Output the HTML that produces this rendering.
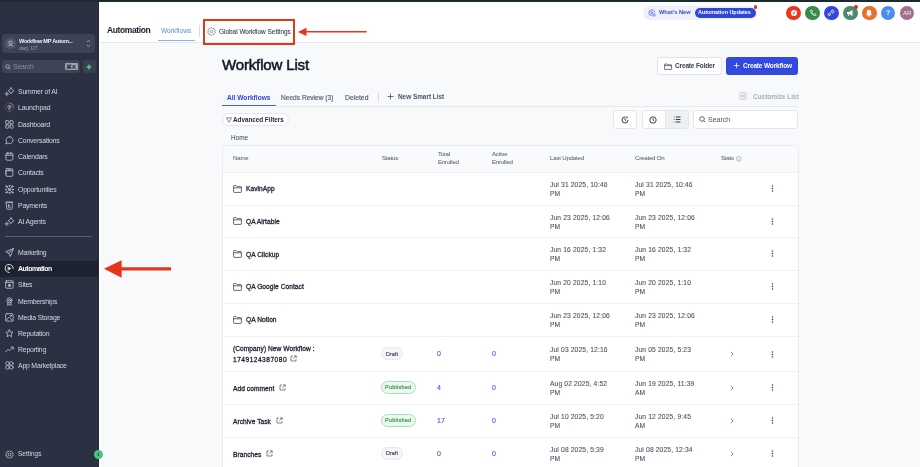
<!DOCTYPE html><html><head><meta charset="utf-8"><title>Workflow List</title><style>
*{margin:0;padding:0;box-sizing:border-box}
html,body{width:920px;height:467px;overflow:hidden;background:#f8f9fb;font-family:"Liberation Sans", sans-serif;}
.abs{position:absolute}
.t{position:absolute;white-space:nowrap;line-height:10px;will-change:transform}
svg{position:absolute;overflow:visible}
</style></head><body>
<div class="abs" style="left:0;top:0;width:920px;height:2px;background:#1b2a2e"></div>
<div class="abs" style="left:0;top:2px;width:99px;height:465px;background:#2b3143"></div>
<div class="abs" style="left:98px;top:2px;width:1px;height:465px;background:#232939"></div>
<div class="abs" style="left:99px;top:2px;width:2.5px;height:465px;background:linear-gradient(90deg,#ffffff,#f8f9fb)"></div>
<div class="abs" style="left:2px;top:34px;width:93px;height:19px;border-radius:4px;background:#3d4356"></div>
<div class="abs" style="left:5px;top:38px;width:11px;height:11px;border-radius:50%;background:#52586a"></div>
<svg style="left:7px;top:40px" width="7" height="7" viewBox="0 0 7 7"><circle cx="3.5" cy="2.6" r="1.6" fill="none" stroke="#c9cdd6" stroke-width="0.8"/><path d="M1 6.3 C1.5 4.6 5.5 4.6 6 6.3" fill="none" stroke="#c9cdd6" stroke-width="0.8"/></svg>
<div class="t" style="left:19px;top:35.9px;font-size:5.6px;font-weight:bold;letter-spacing:-0.25px;color:#f2f3f5">Workflow MP Autom...</div>
<div class="t" style="left:19px;top:43px;font-size:5.3px;color:#9aa0ad">darj, UT</div>
<svg style="left:86px;top:39px" width="5" height="9" viewBox="0 0 5 9"><path d="M1 3 L2.5 1.3 L4 3 M1 6 L2.5 7.7 L4 6" fill="none" stroke="#b8bdc8" stroke-width="0.7"/></svg>
<div class="abs" style="left:2px;top:60px;width:78px;height:13px;border-radius:3px;background:#3e4456"></div>
<svg style="left:4.5px;top:63.5px" width="6" height="6" viewBox="0 0 6 6"><circle cx="2.6" cy="2.6" r="1.8" fill="none" stroke="#b9bdc6" stroke-width="0.8"/><path d="M3.9 3.9 L5.4 5.4" stroke="#b9bdc6" stroke-width="0.8"/></svg>
<div class="t" style="left:13px;top:61.7px;font-size:6.8px;letter-spacing:-0.15px;color:#8a909c">Search</div>
<div class="abs" style="left:65px;top:63px;width:13px;height:7px;border-radius:1px;background:#9ea3ae"></div>
<div class="t" style="left:66px;top:61.5px;font-size:5.5px;font-weight:bold;color:#1d2230;letter-spacing:0.3px">&#8984;K</div>
<div class="abs" style="left:83px;top:60px;width:12.5px;height:13px;border-radius:3px;background:#3a4052"></div>
<svg style="left:86.3px;top:63.8px" width="6" height="6" viewBox="0 0 6 6"><path d="M3 0.2 L4 2 L5.6 3 L4 4 L3 5.8 L2 4 L0.4 3 L2 2Z" fill="#3ecf77" stroke="#3ecf77" stroke-width="0.3" stroke-linejoin="round"/></svg>
<div class="abs" style="left:0;top:261px;width:98px;height:15.5px;background:#1d2130"></div>
<div class="abs" style="left:5px;top:236px;width:87px;height:1px;background:#5a6070"></div>
<svg style="left:5.4px;top:86.90px" width="8.8" height="8.8" viewBox="0 0 9 9" fill="none" stroke="#c5c9d2" stroke-width="0.8" stroke-linecap="round" stroke-linejoin="round"><path d="M6.2 0.9 Q7.1 3 9.1 3.9 Q7.1 4.8 6.2 6.9 Q5.3 4.8 3.3 3.9 Q5.3 3 6.2 0.9Z"/><path d="M1.9 5.1 V8.9 M0 7 H3.8"/></svg>
<div class="t" style="left:18px;top:86.95px;font-size:6.9px;letter-spacing:-0.2px;color:#d3d7de">Summer of AI</div>
<svg style="left:5.4px;top:103.40px" width="8.8" height="8.8" viewBox="0 0 9 9" fill="none" stroke="#c5c9d2" stroke-width="0.8" stroke-linecap="round" stroke-linejoin="round"><circle cx="4.5" cy="4.5" r="4.5" stroke="#555c6e"/><path d="M5.2 0.05 A4.5 4.5 0 0 1 8.9 3.6" stroke="#c98236"/><path d="M4.5 6.9 C3.4 5.6 2.9 4.8 2.9 4 A1.6 1.6 0 0 1 6.1 4 C6.1 4.8 5.6 5.6 4.5 6.9Z" stroke="#aeb3be"/><circle cx="4.5" cy="4" r="0.5" stroke="#aeb3be"/></svg>
<div class="t" style="left:18px;top:103.45px;font-size:6.9px;letter-spacing:-0.2px;color:#d3d7de">Launchpad</div>
<svg style="left:5.4px;top:119.50px" width="8.8" height="8.8" viewBox="0 0 9 9" fill="none" stroke="#c5c9d2" stroke-width="0.8" stroke-linecap="round" stroke-linejoin="round"><rect x="0.7" y="0.7" width="3.2" height="3.2" rx="0.6"/><rect x="5.1" y="0.7" width="3.2" height="3.2" rx="0.6"/><rect x="0.7" y="5.1" width="3.2" height="3.2" rx="0.6"/><rect x="5.1" y="5.1" width="3.2" height="3.2" rx="0.6"/></svg>
<div class="t" style="left:18px;top:119.55px;font-size:6.9px;letter-spacing:-0.2px;color:#d3d7de">Dashboard</div>
<svg style="left:5.4px;top:135.60px" width="8.8" height="8.8" viewBox="0 0 9 9" fill="none" stroke="#c5c9d2" stroke-width="0.8" stroke-linecap="round" stroke-linejoin="round"><path d="M4.8 0.8 A3.5 3.5 0 1 1 2.9 7.3 L0.8 8.2 L1.6 6.2 A3.5 3.5 0 0 1 4.8 0.8Z"/></svg>
<div class="t" style="left:18px;top:135.65px;font-size:6.9px;letter-spacing:-0.2px;color:#d3d7de">Conversations</div>
<svg style="left:5.4px;top:152.00px" width="8.8" height="8.8" viewBox="0 0 9 9" fill="none" stroke="#c5c9d2" stroke-width="0.8" stroke-linecap="round" stroke-linejoin="round"><rect x="0.9" y="1.2" width="7.2" height="7.2" rx="1.2"/><path d="M0.9 3.4 H8.1 M3 0.5 V2.3 M6 0.5 V2.3"/></svg>
<div class="t" style="left:18px;top:152.05px;font-size:6.9px;letter-spacing:-0.2px;color:#d3d7de">Calendars</div>
<svg style="left:5.4px;top:168.20px" width="8.8" height="8.8" viewBox="0 0 9 9" fill="none" stroke="#c5c9d2" stroke-width="0.8" stroke-linecap="round" stroke-linejoin="round"><rect x="1" y="0.7" width="7" height="7.8" rx="1"/><path d="M1 2.8 H8 M0.4 4.2 H1 M0.4 6 H1"/><path d="M3.3 2.8 V1.8 H5.7 V2.8"/></svg>
<div class="t" style="left:18px;top:168.25px;font-size:6.9px;letter-spacing:-0.2px;color:#d3d7de">Contacts</div>
<svg style="left:5.4px;top:184.60px" width="8.8" height="8.8" viewBox="0 0 9 9" fill="none" stroke="#c5c9d2" stroke-width="0.8" stroke-linecap="round" stroke-linejoin="round"><circle cx="1.4" cy="1.4" r="0.7"/><circle cx="7.6" cy="1.4" r="0.7"/><circle cx="1.4" cy="7.6" r="0.7"/><circle cx="7.6" cy="7.6" r="0.7"/><circle cx="4.5" cy="4.5" r="0.8"/><circle cx="4.5" cy="1" r="0.6"/><circle cx="4.5" cy="8" r="0.6"/><circle cx="1" cy="4.5" r="0.6"/><circle cx="8" cy="4.5" r="0.6"/><path d="M2.2 2.2 L3.8 3.8 M6.8 2.2 L5.2 3.8 M2.2 6.8 L3.8 5.2 M6.8 6.8 L5.2 5.2"/></svg>
<div class="t" style="left:18px;top:184.65px;font-size:6.9px;letter-spacing:-0.2px;color:#d3d7de">Opportunities</div>
<svg style="left:5.4px;top:200.70px" width="8.8" height="8.8" viewBox="0 0 9 9" fill="none" stroke="#c5c9d2" stroke-width="0.8" stroke-linecap="round" stroke-linejoin="round"><path d="M1.6 1.2 H7.4 V7.6 Q7.4 8.4 6.6 8.4 H2.4 Q1.6 8.4 1.6 7.6Z M1 1.2 H8"/><path d="M3.5 3.4 V6.4 H5.5 M3.5 4.9 H4.8"/></svg>
<div class="t" style="left:18px;top:200.75px;font-size:6.9px;letter-spacing:-0.2px;color:#d3d7de">Payments</div>
<svg style="left:5.4px;top:216.80px" width="8.8" height="8.8" viewBox="0 0 9 9" fill="none" stroke="#c5c9d2" stroke-width="0.8" stroke-linecap="round" stroke-linejoin="round"><path d="M6.2 0.9 Q7.1 3 9.1 3.9 Q7.1 4.8 6.2 6.9 Q5.3 4.8 3.3 3.9 Q5.3 3 6.2 0.9Z"/><path d="M1.9 5.1 V8.9 M0 7 H3.8"/></svg>
<div class="t" style="left:18px;top:216.85px;font-size:6.9px;letter-spacing:-0.2px;color:#d3d7de">AI Agents</div>
<svg style="left:5.4px;top:247.90px" width="8.8" height="8.8" viewBox="0 0 9 9" fill="none" stroke="#c5c9d2" stroke-width="0.8" stroke-linecap="round" stroke-linejoin="round"><path d="M8.3 0.7 L0.7 3.7 L3.8 5.2 L5.3 8.3Z M3.8 5.2 L8.3 0.7"/></svg>
<div class="t" style="left:18px;top:247.95px;font-size:6.9px;letter-spacing:-0.2px;color:#d3d7de">Marketing</div>
<svg style="left:5.4px;top:264.00px" width="8.8" height="8.8" viewBox="0 0 9 9" fill="none" stroke="#c5c9d2" stroke-width="0.8" stroke-linecap="round" stroke-linejoin="round"><path d="M8.4 4.6 A4.1 4.1 0 1 0 4.3 8.7" stroke="#e8eaee" stroke-width="0.95"/><path d="M3.3 3.1 L6.1 4.6 L3.3 6.1Z" fill="#e8eaee" stroke="#e8eaee" stroke-width="0.5"/></svg>
<div class="t" style="left:18px;top:264.05px;font-size:6.9px;letter-spacing:-0.2px;font-weight:bold;letter-spacing:-0.45px;color:#ffffff">Automation</div>
<svg style="left:5.4px;top:280.10px" width="8.8" height="8.8" viewBox="0 0 9 9" fill="none" stroke="#c5c9d2" stroke-width="0.8" stroke-linecap="round" stroke-linejoin="round"><rect x="0.7" y="0.8" width="7.6" height="7.6" rx="0.8"/><path d="M0.7 2.6 H8.3"/><circle cx="4.5" cy="5.5" r="1.1" fill="#c5c9d2"/></svg>
<div class="t" style="left:18px;top:280.15px;font-size:6.9px;letter-spacing:-0.2px;color:#d3d7de">Sites</div>
<svg style="left:5.4px;top:296.60px" width="8.8" height="8.8" viewBox="0 0 9 9" fill="none" stroke="#c5c9d2" stroke-width="0.8" stroke-linecap="round" stroke-linejoin="round"><circle cx="4.5" cy="3.4" r="2.6"/><circle cx="4.5" cy="3.4" r="1.1"/><path d="M3 5.6 L2.7 8.5 L4.5 7.6 L6.3 8.5 L6 5.6"/></svg>
<div class="t" style="left:18px;top:296.65px;font-size:6.9px;letter-spacing:-0.2px;color:#d3d7de">Memberships</div>
<svg style="left:5.4px;top:312.60px" width="8.8" height="8.8" viewBox="0 0 9 9" fill="none" stroke="#c5c9d2" stroke-width="0.8" stroke-linecap="round" stroke-linejoin="round"><rect x="0.7" y="0.7" width="7.6" height="7.6" rx="1.2"/><path d="M0.9 7.6 L4.2 4.2 L8.1 8.1"/><circle cx="6" cy="2.8" r="0.7"/></svg>
<div class="t" style="left:18px;top:312.65px;font-size:6.9px;letter-spacing:-0.2px;color:#d3d7de">Media Storage</div>
<svg style="left:5.4px;top:328.80px" width="8.8" height="8.8" viewBox="0 0 9 9" fill="none" stroke="#c5c9d2" stroke-width="0.8" stroke-linecap="round" stroke-linejoin="round"><path d="M4.5 0.8 L5.6 3.1 L8.2 3.4 L6.3 5.1 L6.8 7.9 L4.5 6.5 L2.2 7.9 L2.7 5.1 L0.8 3.4 L3.4 3.1Z"/></svg>
<div class="t" style="left:18px;top:328.85px;font-size:6.9px;letter-spacing:-0.2px;color:#d3d7de">Reputation</div>
<svg style="left:5.4px;top:345.20px" width="8.8" height="8.8" viewBox="0 0 9 9" fill="none" stroke="#c5c9d2" stroke-width="0.8" stroke-linecap="round" stroke-linejoin="round"><path d="M0.5 7.2 L3.2 4.3 L4.8 5.8 L8.3 2.2 M6.1 2.1 H8.4 V4.4"/></svg>
<div class="t" style="left:18px;top:345.25px;font-size:6.9px;letter-spacing:-0.2px;color:#d3d7de">Reporting</div>
<svg style="left:5.4px;top:361.40px" width="8.8" height="8.8" viewBox="0 0 9 9" fill="none" stroke="#c5c9d2" stroke-width="0.8" stroke-linecap="round" stroke-linejoin="round"><circle cx="2.6" cy="2.6" r="1.9"/><circle cx="6.4" cy="2.6" r="1.9"/><circle cx="2.6" cy="6.4" r="1.9"/><circle cx="6.4" cy="6.4" r="1.9"/></svg>
<div class="t" style="left:18px;top:361.45px;font-size:6.9px;letter-spacing:-0.2px;color:#d3d7de">App Marketplace</div>
<svg style="left:5px;top:449.5px" width="9" height="9" viewBox="0 0 9 9" fill="none" stroke="#c5c9d2" stroke-width="0.75"><path d="M4.5 0.6 L5.4 1.5 L6.7 1.3 L7 2.6 L8.2 3.3 L7.6 4.5 L8.2 5.7 L7 6.4 L6.7 7.7 L5.4 7.5 L4.5 8.4 L3.6 7.5 L2.3 7.7 L2 6.4 L0.8 5.7 L1.4 4.5 L0.8 3.3 L2 2.6 L2.3 1.3 L3.6 1.5Z"/><circle cx="4.5" cy="4.5" r="1.4"/></svg>
<div class="t" style="left:18px;top:449px;font-size:6.5px;color:#d3d7de">Settings</div>
<div class="abs" style="left:93.5px;top:449.7px;width:9.4px;height:9.4px;border-radius:50%;background:#4ec47f"></div>
<svg style="left:96px;top:452px" width="5" height="5" viewBox="0 0 5 5"><path d="M3.2 0.8 L1.6 2.5 L3.2 4.2" fill="none" stroke="#1b3326" stroke-width="1"/></svg>
<div class="abs" style="left:99.5px;top:2px;width:821px;height:40.5px;background:#ffffff;border-bottom:1px solid #e4e7ec"></div>
<div class="t" style="left:106.5px;top:24.9px;font-size:8.5px;font-weight:bold;color:#1f2430;letter-spacing:-0.4px;-webkit-text-stroke:0.05px #1f2430">Automation</div>
<div class="t" style="left:161px;top:26px;font-size:6.6px;color:#4d8fdb">Workflows</div>
<div class="abs" style="left:158px;top:40px;width:37px;height:1px;background:#8cb5e6"></div>
<div class="abs" style="left:198.5px;top:25px;width:0.8px;height:12px;background:#d9dce2"></div>
<svg style="left:206.5px;top:27px" width="9" height="9" viewBox="0 0 9 9" fill="none" stroke="#5b6170" stroke-width="0.6"><path d="M4.5 0.5 L5.4 1.4 L6.7 1.2 L7 2.5 L8.3 3.2 L7.7 4.5 L8.3 5.8 L7 6.5 L6.7 7.8 L5.4 7.6 L4.5 8.5 L3.6 7.6 L2.3 7.8 L2 6.5 L0.7 5.8 L1.3 4.5 L0.7 3.2 L2 2.5 L2.3 1.2 L3.6 1.4Z"/><circle cx="4.5" cy="4.5" r="1.2"/></svg>
<div class="t" style="left:219px;top:27px;font-size:6.45px;color:#3a404e;-webkit-text-stroke:0.1px #3a404e">Global Workflow Settings</div>
<div class="abs" style="left:203px;top:19px;width:91.5px;height:25.7px;border:2px solid #e5361b"></div>
<svg style="left:0;top:0" width="920" height="467"><path d="M306 31.8 H366" stroke="#e5361b" stroke-width="1.6" stroke-linecap="round"/><path d="M297.8 31.9 L306.5 27.8 L306.5 36.1Z" fill="#e5361b"/><path d="M120 268.9 H171" stroke="#e5361b" stroke-width="3.2"/><path d="M104 268.7 L121.6 260.2 L121.6 277.8Z" fill="#e5361b"/></svg>
<div class="abs" style="left:643px;top:6px;width:114px;height:13.7px;border-radius:7px;background:#eef1fb"></div>
<svg style="left:648px;top:8.8px" width="8" height="8" viewBox="0 0 8 8" fill="none" stroke="#4a5bd0" stroke-width="0.7"><path d="M6.8 3.6 A3 3 0 1 0 3.8 6.8"/><path d="M3 2.5 L5 3.8 L3 5Z"/><circle cx="6" cy="6" r="1.2"/></svg>
<div class="t" style="left:659px;top:7.4px;font-size:5.7px;font-weight:bold;color:#3b4cc5">What&#39;s New</div>
<div class="abs" style="left:694.5px;top:7.7px;width:61px;height:10px;border-radius:5px;background:#3047d6"></div>
<div class="t" style="left:698.3px;top:7.3px;font-size:5.4px;font-weight:bold;color:#ffffff">Automation Updates</div>
<div class="abs" style="left:753.7px;top:5.2px;width:3.6px;height:3.6px;border-radius:50%;background:#d8301e"></div>
<div class="abs" style="left:786.2px;top:5.7px;width:14.6px;height:14.6px;border-radius:50%;background:#e5391f"></div>
<div class="abs" style="left:805.2px;top:5.7px;width:14.6px;height:14.6px;border-radius:50%;background:#388a4a"></div>
<div class="abs" style="left:824.1px;top:5.7px;width:14.6px;height:14.6px;border-radius:50%;background:#3347dd"></div>
<div class="abs" style="left:843.1px;top:5.7px;width:14.6px;height:14.6px;border-radius:50%;background:#4b8a6b"></div>
<div class="abs" style="left:862.0px;top:5.7px;width:14.6px;height:14.6px;border-radius:50%;background:#e8702a"></div>
<div class="abs" style="left:880.9px;top:5.7px;width:14.6px;height:14.6px;border-radius:50%;background:#4a8cf2"></div>
<div class="abs" style="left:899.8px;top:5.7px;width:14.6px;height:14.6px;border-radius:50%;background:#a36f8f"></div>
<svg style="left:789.5px;top:9px" width="8" height="8" viewBox="0 0 8 8"><circle cx="4" cy="4" r="3" fill="#ffffff"/><path d="M4.8 2.4 L3.4 4 L4.6 4 L3.2 5.6" stroke="#e5391f" stroke-width="0.8" fill="none"/></svg>
<svg style="left:808.5px;top:9px" width="8" height="8" viewBox="0 0 8 8"><path d="M1.5 1.2 L2.8 1 L3.5 2.6 L2.7 3.3 C3.2 4.4 3.8 5 4.8 5.4 L5.5 4.6 L7 5.3 L6.8 6.6 C4 6.8 1.3 4 1.5 1.2Z" fill="none" stroke="#ffffff" stroke-width="0.7"/></svg>
<svg style="left:827.4px;top:9px" width="8" height="8" viewBox="0 0 8 8" fill="none" stroke="#ffffff" stroke-width="0.7"><path d="M5.5 0.8 L6.1 2 L7.3 2.6 L6.1 3.2 L5.5 4.4 L4.9 3.2 L3.7 2.6 L4.9 2Z"/><path d="M2.4 3.8 L2.9 4.9 L4 5.4 L2.9 5.9 L2.4 7 L1.9 5.9 L0.8 5.4 L1.9 4.9Z"/></svg>
<svg style="left:846.4px;top:9px" width="8" height="8" viewBox="0 0 8 8"><path d="M1 3 H3 L6.5 1 V7 L3 5 H1Z" fill="#ffffff"/><path d="M2.2 5 L2.8 7" stroke="#ffffff" stroke-width="0.9"/></svg>
<div class="abs" style="left:853.8px;top:5.3px;width:3.8px;height:3.8px;border-radius:50%;background:#e02a1c"></div>
<svg style="left:865.3px;top:9px" width="8" height="8" viewBox="0 0 8 8"><path d="M4 0.8 C2.2 0.8 1.8 2.4 1.8 3.6 V5.2 L1 6.2 H7 L6.2 5.2 V3.6 C6.2 2.4 5.8 0.8 4 0.8Z" fill="#ffffff"/><circle cx="4" cy="6.9" r="0.8" fill="#ffffff"/></svg>
<div class="t" style="left:885.5px;top:8px;font-size:7px;font-weight:bold;color:#ffffff">?</div>
<div class="t" style="left:903.1px;top:8px;font-size:6.2px;letter-spacing:-0.2px;color:#f3e8ee">AR</div>
<div class="t" style="left:221.5px;top:57px;font-size:15px;line-height:16px;color:#101828;-webkit-text-stroke:0.55px #101828;letter-spacing:-0.15px">Workflow List</div>
<div class="abs" style="left:656.7px;top:56.7px;width:65px;height:18px;border-radius:3px;background:#fff;border:1px solid #dfe2e8"></div>
<svg style="left:664.3px;top:62.5px" width="8" height="7" viewBox="0 0 8 7" fill="none" stroke="#384050" stroke-width="0.7"><path d="M0.6 1 H3 L3.8 1.8 H7.4 V6.4 H0.6Z"/><path d="M0.6 2.6 H7.4"/></svg>
<div class="t" style="left:674.5px;top:61.3px;font-size:6.5px;font-weight:bold;letter-spacing:-0.15px;color:#344054">Create Folder</div>
<div class="abs" style="left:725.9px;top:56.7px;width:72.5px;height:18px;border-radius:3px;background:#3249e0"></div>
<svg style="left:733px;top:62.2px" width="7" height="7" viewBox="0 0 7 7"><path d="M3.5 0.8 V6.2 M0.8 3.5 H6.2" stroke="#fff" stroke-width="0.8"/></svg>
<div class="t" style="left:743px;top:61.3px;font-size:6.5px;font-weight:bold;letter-spacing:-0.15px;color:#ffffff">Create Workflow</div>
<div class="t" style="left:227px;top:92.5px;font-size:6.6px;font-weight:bold;color:#3147d6">All Workflows</div>
<div class="abs" style="left:221.8px;top:104.9px;width:54px;height:1.6px;background:#4a5fe4"></div>
<div class="t" style="left:281px;top:92.5px;font-size:6.6px;color:#475467;-webkit-text-stroke:0.12px #475467">Needs Review (3)</div>
<div class="t" style="left:345px;top:92.5px;font-size:6.8px;color:#475467;-webkit-text-stroke:0.12px #475467">Deleted</div>
<div class="abs" style="left:378px;top:92px;width:0.8px;height:10px;background:#d9dce2"></div>
<svg style="left:386.5px;top:93px" width="7" height="7" viewBox="0 0 7 7"><path d="M3.5 0.5 V6.5 M0.5 3.5 H6.5" stroke="#475467" stroke-width="0.8"/></svg>
<div class="t" style="left:398px;top:91.5px;font-size:6.4px;font-weight:bold;color:#475467">New Smart List</div>
<div class="abs" style="left:275.8px;top:106px;width:523px;height:0.8px;background:#e6e8ec"></div>
<svg style="left:739px;top:92px" width="8" height="8" viewBox="0 0 8 8" fill="none" stroke="#b4b8c2" stroke-width="0.7"><rect x="0.6" y="0.8" width="6.8" height="2.6" rx="1"/><rect x="0.6" y="4.6" width="6.8" height="2.6" rx="1"/></svg>
<div class="t" style="left:753px;top:91.5px;font-size:6.45px;font-weight:bold;color:#a9adb7">Customize List</div>
<div class="abs" style="left:221.6px;top:113.2px;width:67.8px;height:12.4px;border-radius:6.2px;background:#fff;border:0.8px solid #e4e7eb"></div>
<svg style="left:225.5px;top:116.5px" width="6" height="6" viewBox="0 0 6 6"><path d="M0.5 0.8 H5.5 L3 5.4Z" fill="none" stroke="#344054" stroke-width="0.6" stroke-linejoin="round"/></svg>
<div class="t" style="left:233px;top:114.5px;font-size:6.3px;font-weight:bold;color:#1d2433">Advanced Filters</div>
<div class="abs" style="left:613.2px;top:110.3px;width:23.7px;height:18.4px;border-radius:3px;background:#fff;border:0.8px solid #e2e5ea"></div>
<div class="abs" style="left:641.7px;top:110.3px;width:47px;height:18.4px;border-radius:3px;background:#fff;border:0.8px solid #e2e5ea;overflow:hidden"><div class="abs" style="left:22.2px;top:0;width:25px;height:18.4px;background:#eef0f3;border-left:0.8px solid #e2e5ea"></div></div>
<svg style="left:621px;top:115.5px" width="8" height="8" viewBox="0 0 8 8" fill="none" stroke="#2f3848" stroke-width="0.95"><path d="M7 4 A3 3 0 1 1 4 1 H4.6"/><path d="M4 2.4 V4 L5.2 4.8"/><path d="M5.6 0.4 L6.6 1.6 L5.2 2.2"/></svg>
<svg style="left:649.3px;top:115.5px" width="8" height="8" viewBox="0 0 8 8" fill="none" stroke="#2f3848" stroke-width="0.95"><circle cx="4" cy="4" r="3.2"/><path d="M4 2.2 V4 L5.2 4.8"/></svg>
<svg style="left:672.5px;top:116px" width="8" height="7" viewBox="0 0 8 7" fill="none" stroke="#2a3242" stroke-width="1.1"><path d="M0.8 1 H1.4 M0.8 3.5 H1.4 M0.8 6 H1.4 M2.8 1 H7.4 M2.8 3.5 H7.4 M2.8 6 H7.4"/></svg>
<div class="abs" style="left:692.9px;top:110.3px;width:105.5px;height:18.4px;border-radius:3px;background:#fff;border:0.8px solid #e2e5ea"></div>
<svg style="left:699px;top:116px" width="7" height="7" viewBox="0 0 7 7" fill="none" stroke="#475467" stroke-width="0.9"><circle cx="3" cy="3" r="2.3"/><path d="M4.7 4.7 L6.3 6.3"/></svg>
<div class="t" style="left:707.8px;top:114.5px;font-size:7px;color:#475467">Search</div>
<div class="t" style="left:231px;top:132.8px;font-size:6.4px;color:#344054">Home</div>
<div class="abs" style="left:221.8px;top:144.5px;width:577.4px;height:340px;border-radius:4px;background:#ffffff;border:0.8px solid #e9ebef;overflow:hidden"><div class="abs" style="left:0;top:0;width:100%;height:27.6px;background:#f9fafb;border-bottom:0.6px solid #eef0f3"></div></div>
<div class="t" style="left:233px;top:153.4px;font-size:6.1px;letter-spacing:-0.2px;color:#4b5262">Name</div>
<div class="t" style="left:382px;top:153.4px;font-size:6.1px;letter-spacing:-0.2px;color:#4b5262">Status</div>
<div class="t" style="left:437.5px;top:149.4px;font-size:6.1px;letter-spacing:-0.2px;color:#4b5262">Total</div>
<div class="t" style="left:437.5px;top:157.4px;font-size:6.1px;letter-spacing:-0.2px;color:#4b5262">Enrolled</div>
<div class="t" style="left:492.2px;top:149.4px;font-size:6.1px;letter-spacing:-0.2px;color:#4b5262">Active</div>
<div class="t" style="left:492.2px;top:157.4px;font-size:6.1px;letter-spacing:-0.2px;color:#4b5262">Enrolled</div>
<div class="t" style="left:550px;top:153.4px;font-size:6.1px;letter-spacing:-0.2px;color:#4b5262">Last Updated</div>
<div class="t" style="left:635px;top:153.4px;font-size:6.1px;letter-spacing:-0.2px;color:#4b5262">Created On</div>
<div class="t" style="left:720.8px;top:153.4px;font-size:6.1px;letter-spacing:-0.2px;color:#4b5262">Stats</div>
<svg style="left:735.6px;top:155.6px" width="5.6" height="5.6" viewBox="0 0 5.6 5.6"><circle cx="2.8" cy="2.8" r="2.4" fill="none" stroke="#7a808c" stroke-width="0.5"/><path d="M2.8 2.4 V4" stroke="#7a808c" stroke-width="0.5"/></svg>
<div class="abs" style="left:222.60000000000002px;top:204.8px;width:575.8px;height:0.8px;background:#f0f1f4"></div>
<div class="abs" style="left:222.60000000000002px;top:237.2px;width:575.8px;height:0.8px;background:#f0f1f4"></div>
<div class="abs" style="left:222.60000000000002px;top:269.9px;width:575.8px;height:0.8px;background:#f0f1f4"></div>
<div class="abs" style="left:222.60000000000002px;top:302.7px;width:575.8px;height:0.8px;background:#f0f1f4"></div>
<div class="abs" style="left:222.60000000000002px;top:336.2px;width:575.8px;height:0.8px;background:#f0f1f4"></div>
<div class="abs" style="left:222.60000000000002px;top:370.9px;width:575.8px;height:0.8px;background:#f0f1f4"></div>
<div class="abs" style="left:222.60000000000002px;top:403.9px;width:575.8px;height:0.8px;background:#f0f1f4"></div>
<div class="abs" style="left:222.60000000000002px;top:436.6px;width:575.8px;height:0.8px;background:#f0f1f4"></div>
<svg style="left:233px;top:184.6px" width="9" height="8" viewBox="0 0 9 8" fill="none" stroke="#3b4150" stroke-width="0.8" stroke-linejoin="round"><path d="M0.6 1.2 Q0.6 0.6 1.2 0.6 H3.2 L4.2 1.6 H7.8 Q8.4 1.6 8.4 2.2 V6.8 Q8.4 7.4 7.8 7.4 H1.2 Q0.6 7.4 0.6 6.8Z"/><path d="M0.6 2.8 H8.4"/></svg>
<div class="t" style="left:245.6px;top:183.9px;font-size:6.6px;letter-spacing:0.06px;color:#1d2433;-webkit-text-stroke:0.3px #1d2433">KavinApp</div>
<div class="t" style="left:550px;top:180.2px;font-size:6.7px;letter-spacing:0.15px;-webkit-text-stroke:0.1px #4d5466;color:#4d5466">Jul 31 2025, 10:46</div>
<div class="t" style="left:550px;top:189.2px;font-size:6.7px;letter-spacing:0.15px;-webkit-text-stroke:0.1px #4d5466;color:#4d5466">PM</div>
<div class="t" style="left:635px;top:180.2px;font-size:6.7px;letter-spacing:0.15px;-webkit-text-stroke:0.1px #4d5466;color:#4d5466">Jul 31 2025, 10:46</div>
<div class="t" style="left:635px;top:189.2px;font-size:6.7px;letter-spacing:0.15px;-webkit-text-stroke:0.1px #4d5466;color:#4d5466">PM</div>
<svg style="left:771px;top:185.4px" width="3" height="7" viewBox="0 0 3 7"><circle cx="1.5" cy="1" r="0.75" fill="#2d3343"/><circle cx="1.5" cy="3.5" r="0.75" fill="#2d3343"/><circle cx="1.5" cy="6" r="0.75" fill="#2d3343"/></svg>
<svg style="left:233px;top:217.2px" width="9" height="8" viewBox="0 0 9 8" fill="none" stroke="#3b4150" stroke-width="0.8" stroke-linejoin="round"><path d="M0.6 1.2 Q0.6 0.6 1.2 0.6 H3.2 L4.2 1.6 H7.8 Q8.4 1.6 8.4 2.2 V6.8 Q8.4 7.4 7.8 7.4 H1.2 Q0.6 7.4 0.6 6.8Z"/><path d="M0.6 2.8 H8.4"/></svg>
<div class="t" style="left:245.6px;top:216.5px;font-size:6.6px;letter-spacing:0.06px;color:#1d2433;-webkit-text-stroke:0.3px #1d2433">QA Airtable</div>
<div class="t" style="left:550px;top:212.7px;font-size:6.7px;letter-spacing:0.15px;-webkit-text-stroke:0.1px #4d5466;color:#4d5466">Jun 23 2025, 12:06</div>
<div class="t" style="left:550px;top:221.7px;font-size:6.7px;letter-spacing:0.15px;-webkit-text-stroke:0.1px #4d5466;color:#4d5466">PM</div>
<div class="t" style="left:635px;top:212.7px;font-size:6.7px;letter-spacing:0.15px;-webkit-text-stroke:0.1px #4d5466;color:#4d5466">Jun 23 2025, 12:06</div>
<div class="t" style="left:635px;top:221.7px;font-size:6.7px;letter-spacing:0.15px;-webkit-text-stroke:0.1px #4d5466;color:#4d5466">PM</div>
<svg style="left:771px;top:217.9px" width="3" height="7" viewBox="0 0 3 7"><circle cx="1.5" cy="1" r="0.75" fill="#2d3343"/><circle cx="1.5" cy="3.5" r="0.75" fill="#2d3343"/><circle cx="1.5" cy="6" r="0.75" fill="#2d3343"/></svg>
<svg style="left:233px;top:250.3px" width="9" height="8" viewBox="0 0 9 8" fill="none" stroke="#3b4150" stroke-width="0.8" stroke-linejoin="round"><path d="M0.6 1.2 Q0.6 0.6 1.2 0.6 H3.2 L4.2 1.6 H7.8 Q8.4 1.6 8.4 2.2 V6.8 Q8.4 7.4 7.8 7.4 H1.2 Q0.6 7.4 0.6 6.8Z"/><path d="M0.6 2.8 H8.4"/></svg>
<div class="t" style="left:245.6px;top:249.6px;font-size:6.6px;letter-spacing:0.06px;color:#1d2433;-webkit-text-stroke:0.3px #1d2433">QA Clickup</div>
<div class="t" style="left:550px;top:245.2px;font-size:6.7px;letter-spacing:0.15px;-webkit-text-stroke:0.1px #4d5466;color:#4d5466">Jun 16 2025, 1:32</div>
<div class="t" style="left:550px;top:254.2px;font-size:6.7px;letter-spacing:0.15px;-webkit-text-stroke:0.1px #4d5466;color:#4d5466">PM</div>
<div class="t" style="left:635px;top:245.2px;font-size:6.7px;letter-spacing:0.15px;-webkit-text-stroke:0.1px #4d5466;color:#4d5466">Jun 16 2025, 1:32</div>
<div class="t" style="left:635px;top:254.2px;font-size:6.7px;letter-spacing:0.15px;-webkit-text-stroke:0.1px #4d5466;color:#4d5466">PM</div>
<svg style="left:771px;top:250.4px" width="3" height="7" viewBox="0 0 3 7"><circle cx="1.5" cy="1" r="0.75" fill="#2d3343"/><circle cx="1.5" cy="3.5" r="0.75" fill="#2d3343"/><circle cx="1.5" cy="6" r="0.75" fill="#2d3343"/></svg>
<svg style="left:233px;top:282.8px" width="9" height="8" viewBox="0 0 9 8" fill="none" stroke="#3b4150" stroke-width="0.8" stroke-linejoin="round"><path d="M0.6 1.2 Q0.6 0.6 1.2 0.6 H3.2 L4.2 1.6 H7.8 Q8.4 1.6 8.4 2.2 V6.8 Q8.4 7.4 7.8 7.4 H1.2 Q0.6 7.4 0.6 6.8Z"/><path d="M0.6 2.8 H8.4"/></svg>
<div class="t" style="left:245.6px;top:282.1px;font-size:6.6px;letter-spacing:0.06px;color:#1d2433;-webkit-text-stroke:0.3px #1d2433">QA Google Contact</div>
<div class="t" style="left:550px;top:278.0px;font-size:6.7px;letter-spacing:0.15px;-webkit-text-stroke:0.1px #4d5466;color:#4d5466">Jun 20 2025, 1:10</div>
<div class="t" style="left:550px;top:287.0px;font-size:6.7px;letter-spacing:0.15px;-webkit-text-stroke:0.1px #4d5466;color:#4d5466">PM</div>
<div class="t" style="left:635px;top:278.0px;font-size:6.7px;letter-spacing:0.15px;-webkit-text-stroke:0.1px #4d5466;color:#4d5466">Jun 20 2025, 1:10</div>
<div class="t" style="left:635px;top:287.0px;font-size:6.7px;letter-spacing:0.15px;-webkit-text-stroke:0.1px #4d5466;color:#4d5466">PM</div>
<svg style="left:771px;top:283.2px" width="3" height="7" viewBox="0 0 3 7"><circle cx="1.5" cy="1" r="0.75" fill="#2d3343"/><circle cx="1.5" cy="3.5" r="0.75" fill="#2d3343"/><circle cx="1.5" cy="6" r="0.75" fill="#2d3343"/></svg>
<svg style="left:233px;top:315.7px" width="9" height="8" viewBox="0 0 9 8" fill="none" stroke="#3b4150" stroke-width="0.8" stroke-linejoin="round"><path d="M0.6 1.2 Q0.6 0.6 1.2 0.6 H3.2 L4.2 1.6 H7.8 Q8.4 1.6 8.4 2.2 V6.8 Q8.4 7.4 7.8 7.4 H1.2 Q0.6 7.4 0.6 6.8Z"/><path d="M0.6 2.8 H8.4"/></svg>
<div class="t" style="left:245.6px;top:315.0px;font-size:6.6px;letter-spacing:0.06px;color:#1d2433;-webkit-text-stroke:0.3px #1d2433">QA Notion</div>
<div class="t" style="left:550px;top:311.2px;font-size:6.7px;letter-spacing:0.15px;-webkit-text-stroke:0.1px #4d5466;color:#4d5466">Jun 23 2025, 12:06</div>
<div class="t" style="left:550px;top:320.2px;font-size:6.7px;letter-spacing:0.15px;-webkit-text-stroke:0.1px #4d5466;color:#4d5466">PM</div>
<div class="t" style="left:635px;top:311.2px;font-size:6.7px;letter-spacing:0.15px;-webkit-text-stroke:0.1px #4d5466;color:#4d5466">Jun 23 2025, 12:06</div>
<div class="t" style="left:635px;top:320.2px;font-size:6.7px;letter-spacing:0.15px;-webkit-text-stroke:0.1px #4d5466;color:#4d5466">PM</div>
<svg style="left:771px;top:316.4px" width="3" height="7" viewBox="0 0 3 7"><circle cx="1.5" cy="1" r="0.75" fill="#2d3343"/><circle cx="1.5" cy="3.5" r="0.75" fill="#2d3343"/><circle cx="1.5" cy="6" r="0.75" fill="#2d3343"/></svg>
<div class="t" style="left:233px;top:343.5px;font-size:6.6px;letter-spacing:0.06px;color:#1d2433;-webkit-text-stroke:0.3px #1d2433">(Company) New Workflow :</div>
<div class="t" style="left:233px;top:355.0px;font-size:6.6px;letter-spacing:0.49px;color:#1d2433;-webkit-text-stroke:0.3px #1d2433">1749124387080</div>
<svg style="left:290px;top:355.0px" width="7" height="7" viewBox="0 0 7 7" fill="none" stroke="#4f5564" stroke-width="0.7"><path d="M3 1 H1 V6 H6 V4 M4 0.8 H6.2 V3 M6.2 0.8 L3.3 3.7"/></svg>
<div class="abs" style="left:381.3px;top:347.4px;width:21.6px;height:12.8px;border-radius:6.4px;background:#f5f6f8;border:0.8px solid #e6e8ec"></div>
<div class="t" style="left:385.8px;top:348.8px;font-size:5.5px;color:#2f3644;-webkit-text-stroke:0.1px #2f3644">Draft</div>
<div class="t" style="left:437.1px;top:349.0px;font-size:7px;color:#4a5ee6;-webkit-text-stroke:0.15px #4a5ee6">0</div>
<div class="t" style="left:491.8px;top:349.0px;font-size:7px;color:#4a5ee6;-webkit-text-stroke:0.15px #4a5ee6">0</div>
<svg style="left:730px;top:351.0px" width="4" height="6" viewBox="0 0 4 6"><path d="M1 0.8 L3 3 L1 5.2" fill="none" stroke="#475467" stroke-width="0.7"/></svg>
<div class="t" style="left:550px;top:345.3px;font-size:6.7px;letter-spacing:0.15px;-webkit-text-stroke:0.1px #4d5466;color:#4d5466">Jul 03 2025, 12:16</div>
<div class="t" style="left:550px;top:354.3px;font-size:6.7px;letter-spacing:0.15px;-webkit-text-stroke:0.1px #4d5466;color:#4d5466">PM</div>
<div class="t" style="left:635px;top:345.3px;font-size:6.7px;letter-spacing:0.15px;-webkit-text-stroke:0.1px #4d5466;color:#4d5466">Jun 05 2025, 5:23</div>
<div class="t" style="left:635px;top:354.3px;font-size:6.7px;letter-spacing:0.15px;-webkit-text-stroke:0.1px #4d5466;color:#4d5466">PM</div>
<svg style="left:771px;top:350.5px" width="3" height="7" viewBox="0 0 3 7"><circle cx="1.5" cy="1" r="0.75" fill="#2d3343"/><circle cx="1.5" cy="3.5" r="0.75" fill="#2d3343"/><circle cx="1.5" cy="6" r="0.75" fill="#2d3343"/></svg>
<div class="t" style="left:233px;top:383.9px;font-size:6.6px;letter-spacing:0.06px;color:#1d2433;-webkit-text-stroke:0.3px #1d2433">Add comment</div>
<svg style="left:279.3356015625px;top:383.8px" width="7" height="7" viewBox="0 0 7 7" fill="none" stroke="#4f5564" stroke-width="0.7"><path d="M3 1 H1 V6 H6 V4 M4 0.8 H6.2 V3 M6.2 0.8 L3.3 3.7"/></svg>
<div class="abs" style="left:381.3px;top:381.3px;width:34.6px;height:13px;border-radius:6.5px;background:#edf9f0;border:0.8px solid #a8deb6"></div>
<div class="t" style="left:385.2px;top:382.4px;font-size:5.5px;letter-spacing:0.25px;color:#3a9a56;-webkit-text-stroke:0.2px #3a9a56">Published</div>
<div class="t" style="left:437.1px;top:382.8px;font-size:7px;color:#4a5ee6;-webkit-text-stroke:0.15px #4a5ee6">4</div>
<div class="t" style="left:491.8px;top:382.8px;font-size:7px;color:#4a5ee6;-webkit-text-stroke:0.15px #4a5ee6">0</div>
<svg style="left:730px;top:384.8px" width="4" height="6" viewBox="0 0 4 6"><path d="M1 0.8 L3 3 L1 5.2" fill="none" stroke="#475467" stroke-width="0.7"/></svg>
<div class="t" style="left:550px;top:379.1px;font-size:6.7px;letter-spacing:0.15px;-webkit-text-stroke:0.1px #4d5466;color:#4d5466">Aug 02 2025, 4:52</div>
<div class="t" style="left:550px;top:388.1px;font-size:6.7px;letter-spacing:0.15px;-webkit-text-stroke:0.1px #4d5466;color:#4d5466">PM</div>
<div class="t" style="left:635px;top:379.1px;font-size:6.7px;letter-spacing:0.15px;-webkit-text-stroke:0.1px #4d5466;color:#4d5466">Jun 19 2025, 11:39</div>
<div class="t" style="left:635px;top:388.1px;font-size:6.7px;letter-spacing:0.15px;-webkit-text-stroke:0.1px #4d5466;color:#4d5466">AM</div>
<svg style="left:771px;top:384.3px" width="3" height="7" viewBox="0 0 3 7"><circle cx="1.5" cy="1" r="0.75" fill="#2d3343"/><circle cx="1.5" cy="3.5" r="0.75" fill="#2d3343"/><circle cx="1.5" cy="6" r="0.75" fill="#2d3343"/></svg>
<div class="t" style="left:233px;top:416.8px;font-size:6.6px;letter-spacing:0.06px;color:#1d2433;-webkit-text-stroke:0.3px #1d2433">Archive Task</div>
<svg style="left:275.9840390625px;top:416.6px" width="7" height="7" viewBox="0 0 7 7" fill="none" stroke="#4f5564" stroke-width="0.7"><path d="M3 1 H1 V6 H6 V4 M4 0.8 H6.2 V3 M6.2 0.8 L3.3 3.7"/></svg>
<div class="abs" style="left:381.3px;top:414.1px;width:34.6px;height:13px;border-radius:6.5px;background:#edf9f0;border:0.8px solid #a8deb6"></div>
<div class="t" style="left:385.2px;top:415.2px;font-size:5.5px;letter-spacing:0.25px;color:#3a9a56;-webkit-text-stroke:0.2px #3a9a56">Published</div>
<div class="t" style="left:437.1px;top:415.6px;font-size:7px;color:#4a5ee6;-webkit-text-stroke:0.15px #4a5ee6">17</div>
<div class="t" style="left:491.8px;top:415.6px;font-size:7px;color:#4a5ee6;-webkit-text-stroke:0.15px #4a5ee6">0</div>
<svg style="left:730px;top:417.6px" width="4" height="6" viewBox="0 0 4 6"><path d="M1 0.8 L3 3 L1 5.2" fill="none" stroke="#475467" stroke-width="0.7"/></svg>
<div class="t" style="left:550px;top:411.9px;font-size:6.7px;letter-spacing:0.15px;-webkit-text-stroke:0.1px #4d5466;color:#4d5466">Jul 10 2025, 5:20</div>
<div class="t" style="left:550px;top:420.9px;font-size:6.7px;letter-spacing:0.15px;-webkit-text-stroke:0.1px #4d5466;color:#4d5466">PM</div>
<div class="t" style="left:635px;top:411.9px;font-size:6.7px;letter-spacing:0.15px;-webkit-text-stroke:0.1px #4d5466;color:#4d5466">Jun 12 2025, 9:45</div>
<div class="t" style="left:635px;top:420.9px;font-size:6.7px;letter-spacing:0.15px;-webkit-text-stroke:0.1px #4d5466;color:#4d5466">AM</div>
<svg style="left:771px;top:417.1px" width="3" height="7" viewBox="0 0 3 7"><circle cx="1.5" cy="1" r="0.75" fill="#2d3343"/><circle cx="1.5" cy="3.5" r="0.75" fill="#2d3343"/><circle cx="1.5" cy="6" r="0.75" fill="#2d3343"/></svg>
<div class="t" style="left:233px;top:449.6px;font-size:6.6px;letter-spacing:0.06px;color:#1d2433;-webkit-text-stroke:0.3px #1d2433">Branches</div>
<svg style="left:265.6246640625px;top:449.5px" width="7" height="7" viewBox="0 0 7 7" fill="none" stroke="#4f5564" stroke-width="0.7"><path d="M3 1 H1 V6 H6 V4 M4 0.8 H6.2 V3 M6.2 0.8 L3.3 3.7"/></svg>
<div class="abs" style="left:381.3px;top:446.9px;width:21.6px;height:12.8px;border-radius:6.4px;background:#f5f6f8;border:0.8px solid #e6e8ec"></div>
<div class="t" style="left:385.8px;top:448.3px;font-size:5.5px;color:#2f3644;-webkit-text-stroke:0.1px #2f3644">Draft</div>
<div class="t" style="left:437.1px;top:448.5px;font-size:7px;color:#4a5ee6;-webkit-text-stroke:0.15px #4a5ee6">0</div>
<div class="t" style="left:491.8px;top:448.5px;font-size:7px;color:#4a5ee6;-webkit-text-stroke:0.15px #4a5ee6">0</div>
<svg style="left:730px;top:450.5px" width="4" height="6" viewBox="0 0 4 6"><path d="M1 0.8 L3 3 L1 5.2" fill="none" stroke="#475467" stroke-width="0.7"/></svg>
<div class="t" style="left:550px;top:444.8px;font-size:6.7px;letter-spacing:0.15px;-webkit-text-stroke:0.1px #4d5466;color:#4d5466">Jul 08 2025, 5:39</div>
<div class="t" style="left:550px;top:453.8px;font-size:6.7px;letter-spacing:0.15px;-webkit-text-stroke:0.1px #4d5466;color:#4d5466">PM</div>
<div class="t" style="left:635px;top:444.8px;font-size:6.7px;letter-spacing:0.15px;-webkit-text-stroke:0.1px #4d5466;color:#4d5466">Jul 08 2025, 12:34</div>
<div class="t" style="left:635px;top:453.8px;font-size:6.7px;letter-spacing:0.15px;-webkit-text-stroke:0.1px #4d5466;color:#4d5466">PM</div>
<svg style="left:771px;top:450.0px" width="3" height="7" viewBox="0 0 3 7"><circle cx="1.5" cy="1" r="0.75" fill="#2d3343"/><circle cx="1.5" cy="3.5" r="0.75" fill="#2d3343"/><circle cx="1.5" cy="6" r="0.75" fill="#2d3343"/></svg>
</body></html>
